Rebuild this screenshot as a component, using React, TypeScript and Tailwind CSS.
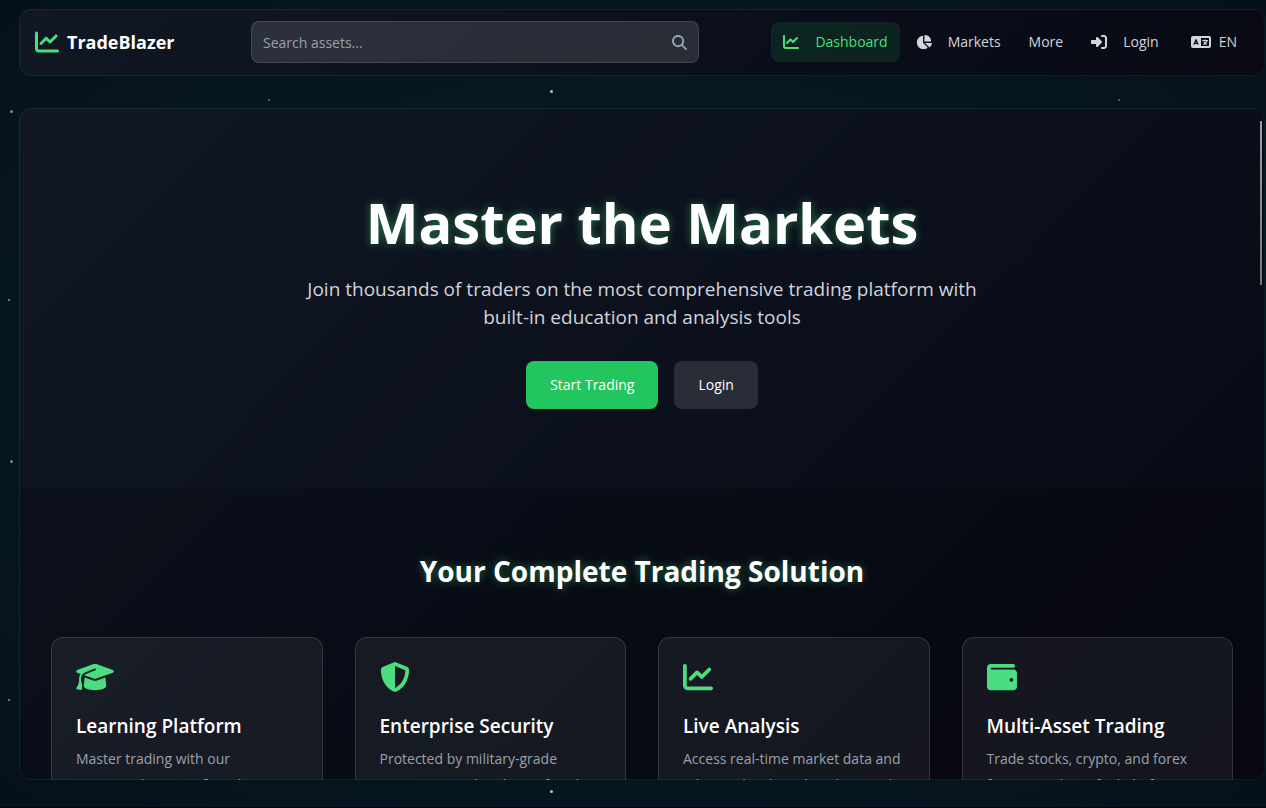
import type { ReactNode } from "react";
import {
  FaChartLine,
  FaChartPie,
  FaGraduationCap,
  FaLanguage,
  FaMagnifyingGlass,
  FaRightToBracket,
  FaShieldHalved,
  FaWallet,
} from "react-icons/fa6";

const features = [
  {
    icon: <FaGraduationCap className="h-[30px] w-[38px]" />,
    title: "Learning Platform",
    text: "Master trading with our structured courses from basic concepts to advanced strategies",
  },
  {
    icon: <FaShieldHalved className="size-[30px]" />,
    title: "Enterprise Security",
    text: "Protected by military-grade encryption and real-time fraud detection",
  },
  {
    icon: <FaChartLine className="size-[30px]" />,
    title: "Live Analysis",
    text: "Access real-time market data and advanced technical analysis tools",
  },
  {
    icon: <FaWallet className="size-[30px]" />,
    title: "Multi-Asset Trading",
    text: "Trade stocks, crypto, and forex from a single unified platform",
  },
];

const stars = [
  "left-[550px] top-[90px] size-[3px] bg-[#a9c8cc]",
  "left-[550px] top-[790px] size-[3px] bg-[#a9c8cc]",
  "left-[10px] top-[110px] size-[3px] bg-[#7c888d]",
  "left-[8px] top-[299px] size-[2px] bg-[#8f9c9f]",
  "left-[10px] top-[460px] size-[3px] bg-[#7c888d]",
  "left-[8px] top-[699px] size-[2px] bg-[#8f9c9f]",
  "left-[268px] top-[99px] size-[2px] bg-[#5c6c71]",
  "left-[1118px] top-[99px] size-[2px] bg-[#5c6c71]",
];

const panel =
  "rounded-xl outline outline-1 -outline-offset-1 outline-[#4ade80]/10 bg-[linear-gradient(135deg,#121725_0%,#0b101c_50%,#080913_100%)]";

function NavItem({ icon, active, children }: { icon?: ReactNode; active?: boolean; children: ReactNode }) {
  return (
    <a
      href="#"
      className={`flex h-10 items-center gap-4 rounded-lg px-3 ${
        active ? "bg-[#22c55e]/12 text-[#4ade80]" : "text-gray-300"
      }`}
    >
      {icon}
      {children}
    </a>
  );
}

export default function App() {
  return (
    <div className="relative flex h-screen flex-col overflow-hidden border-b border-[#03060c] bg-[radial-gradient(ellipse_at_center,#081e26_0%,#061721_60%,#04111a_100%)] pt-[9px] pr-px pb-[27px] pl-[19px] font-['Open_Sans',sans-serif] text-sm leading-6 text-white">
      {stars.map((star) => (
        <span key={star} className={`absolute rounded-full ${star}`} />
      ))}

      <header className={`flex h-[67px] shrink-0 items-center justify-between px-4 pb-px ${panel}`}>
        <a href="#" className="flex w-[216px] items-center gap-2 text-lg font-bold">
          <FaChartLine className="size-6 text-[#4ade80]" />
          TradeBlazer
        </a>
        <label className="relative flex max-w-[448px] flex-1 items-center">
          <input
            type="text"
            aria-label="Search assets"
            placeholder="Search assets..."
            className="h-[42px] w-full rounded-lg border border-white/12 bg-white/12 pr-10 pl-[11px] placeholder:text-gray-400 focus:outline-none"
          />
          <FaMagnifyingGlass className="absolute right-3 size-[15px] text-gray-400" />
        </label>
        <nav className="ml-auto flex items-center gap-1">
          <NavItem active icon={<FaChartLine className="size-4" />}>
            Dashboard
          </NavItem>
          <NavItem icon={<FaChartPie className="size-4" />}>Markets</NavItem>
          <NavItem>More</NavItem>
          <NavItem icon={<FaRightToBracket className="size-4" />}>Login</NavItem>
          <button type="button" className="ml-1 flex h-10 items-center gap-2 px-3 text-gray-300">
            <FaLanguage className="h-4 w-5" />
            EN
          </button>
        </nav>
      </header>

      <main className={`relative mt-8 flex min-h-0 flex-1 flex-col overflow-hidden ${panel}`}>
        <div className="flex-1 overflow-y-auto [scrollbar-width:none]">
          <section className="mt-px flex flex-col items-center px-8 py-20 text-center">
            <h1 className="mb-5 text-[56px] leading-[66px] font-bold [text-shadow:0_0_10px_rgba(74,222,128,0.45)]">
              Master the Markets
            </h1>
            <p className="mb-[30px] max-w-2xl text-[19px] leading-7 text-gray-300">
              Join thousands of traders on the most comprehensive trading platform with built-in
              education and analysis tools
            </p>
            <div className="flex gap-4">
              <button type="button" className="h-12 rounded-lg bg-[#22c55e] px-6">
                Start Trading
              </button>
              <button type="button" className="h-12 rounded-lg bg-white/12 px-6">
                Login
              </button>
            </div>
          </section>

          <section className="bg-black/20 px-8 py-16">
            <h2 className="mb-12 text-center text-[28px] leading-9 font-bold [text-shadow:0_0_10px_rgba(74,222,128,0.45)]">
              Your Complete Trading Solution
            </h2>
            <div className="grid grid-cols-4 gap-8">
              {features.map((feature) => (
                <article key={feature.title} className="rounded-xl border border-white/12 bg-white/6 p-6">
                  <div className="mb-5 text-[#4ade80]">{feature.icon}</div>
                  <h3 className="mb-1.5 text-[19px] leading-7 font-semibold">{feature.title}</h3>
                  <p className="leading-[26px] text-gray-400">{feature.text}</p>
                </article>
              ))}
            </div>
          </section>
        </div>
        <div className="absolute top-[13px] right-[3px] h-[164px] w-[2px] bg-gradient-to-b from-[#a0a0a0] to-[#77777c]" />
      </main>
    </div>
  );
}
